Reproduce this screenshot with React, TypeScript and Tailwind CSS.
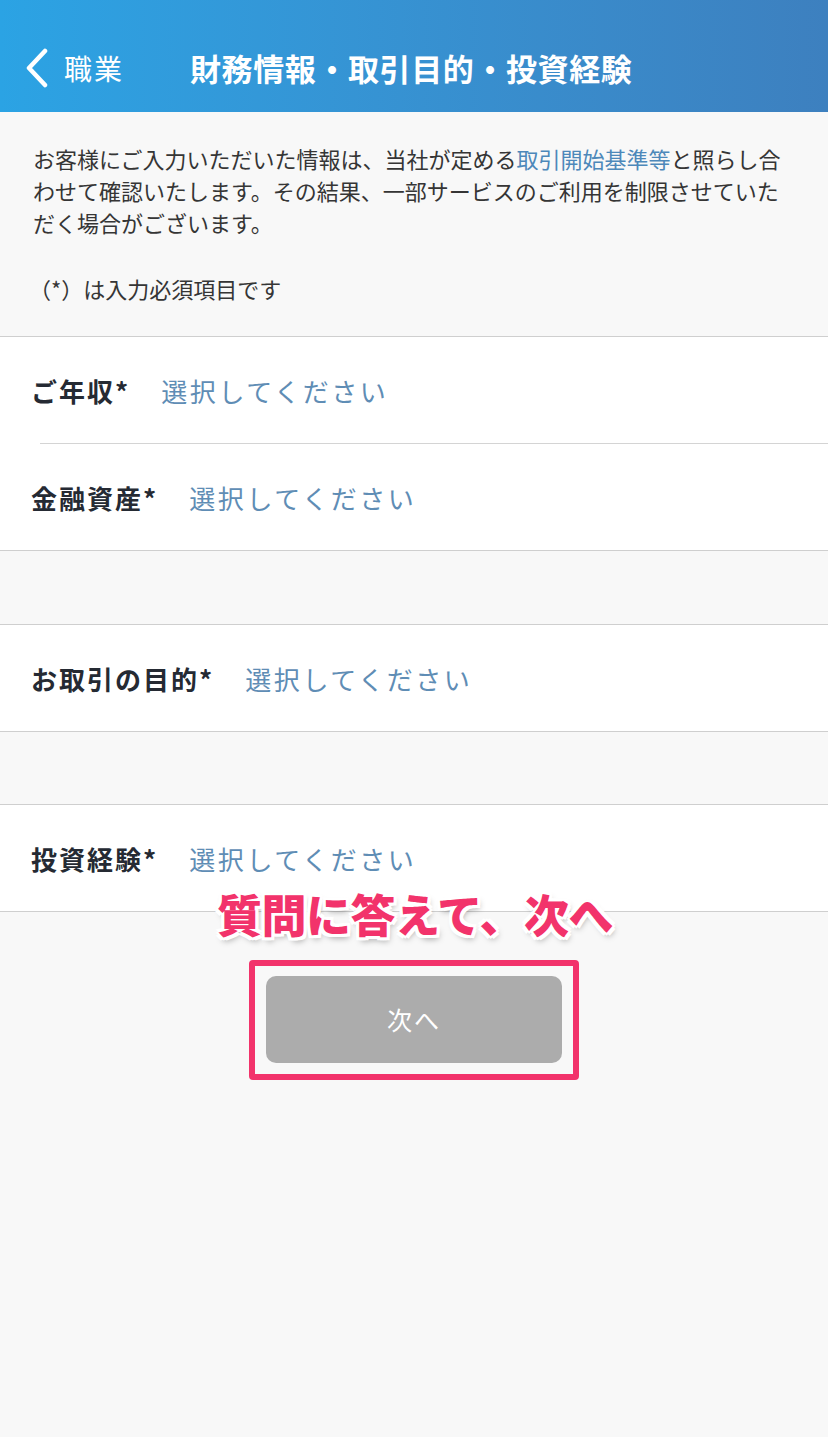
import React from "react";

const font = { fontFamily: '"Noto Sans CJK JP", "Noto Sans", sans-serif' };

function Row({ label }: { label: string }) {
  return (
    <div className="flex h-[106px] items-center pl-[31px]">
      <span className="text-[26px] font-bold tracking-[2px] text-[#252a33]">{label}</span>
      <span className="ml-[31px] text-[26px] tracking-[2.6px] text-[#5f8db5]">選択してください</span>
    </div>
  );
}

export default function App() {
  return (
    <div className="relative min-h-[1437px] w-[828px] bg-[#f8f8f8]" style={font}>
      <header className="flex h-[112px] items-center bg-gradient-to-r from-[#2ba3e4] to-[#3d80bf] pt-[24px] text-white">
        <svg width="26" height="40" viewBox="0 0 26 40" className="ml-[24px]" fill="none">
          <path d="M21 3 L5 20 L21 37" stroke="white" strokeWidth="4.5" strokeLinecap="round" strokeLinejoin="round" />
        </svg>
        <span className="ml-[14px] text-[28px] tracking-[2px]">職業</span>
        <span className="ml-[66px] text-[31px] font-bold tracking-[0.6px]">財務情報・取引目的・投資経験</span>
      </header>

      <div className="px-[33px] pt-[30px] pb-[32px] text-[22px] leading-[32px] text-[#353535]">
        <p>
          お客様にご入力いただいた情報は、当社が定める<span className="text-[#4d88ba]">取引開始基準等</span>と照らし合
          <br />
          わせて確認いたします。その結果、一部サービスのご利用を制限させていた
          <br />
          だく場合がございます。
        </p>
        <p className="mt-[34px] -ml-[4px]">（*）は入力必須項目です</p>
      </div>

      <section className="border-t border-b border-[#cfcfcf] bg-white">
        <Row label="ご年収*" />
        <div className="ml-[40px] border-t border-[#d4d4d4]" />
        <Row label="金融資産*" />
      </section>

      <div className="h-[73px]" />

      <section className="border-t border-b border-[#cfcfcf] bg-white">
        <Row label="お取引の目的*" />
      </section>

      <div className="h-[72px]" />

      <section className="border-t border-b border-[#cfcfcf] bg-white">
        <Row label="投資経験*" />
      </section>

      <div className="relative flex justify-center pt-[48px]">
        <div className="absolute left-0 right-0 top-[-26px] flex justify-center pl-[2px]">
          <span
            className="text-[45px] leading-[56px] font-black tracking-[-0.5px] text-[#f2336b] [text-shadow:-3px_-3px_0_#fff,3px_-3px_0_#fff,-3px_3px_0_#fff,3px_3px_0_#fff,0_-3px_0_#fff,0_3px_0_#fff,-3px_0_0_#fff,3px_0_0_#fff,2px_4px_6px_rgba(0,0,0,0.35)]"
          >
            質問に答えて、次へ
          </span>
        </div>
        <div className="rounded-[4px] border-[6px] border-[#f2336b] px-[11px] pt-[10px] pb-[11px]">
          <button className="flex h-[87px] w-[296px] items-center justify-center rounded-[10px] bg-[#acacac] text-[25px] tracking-[2px] text-white">
            次へ
          </button>
        </div>
      </div>
    </div>
  );
}
